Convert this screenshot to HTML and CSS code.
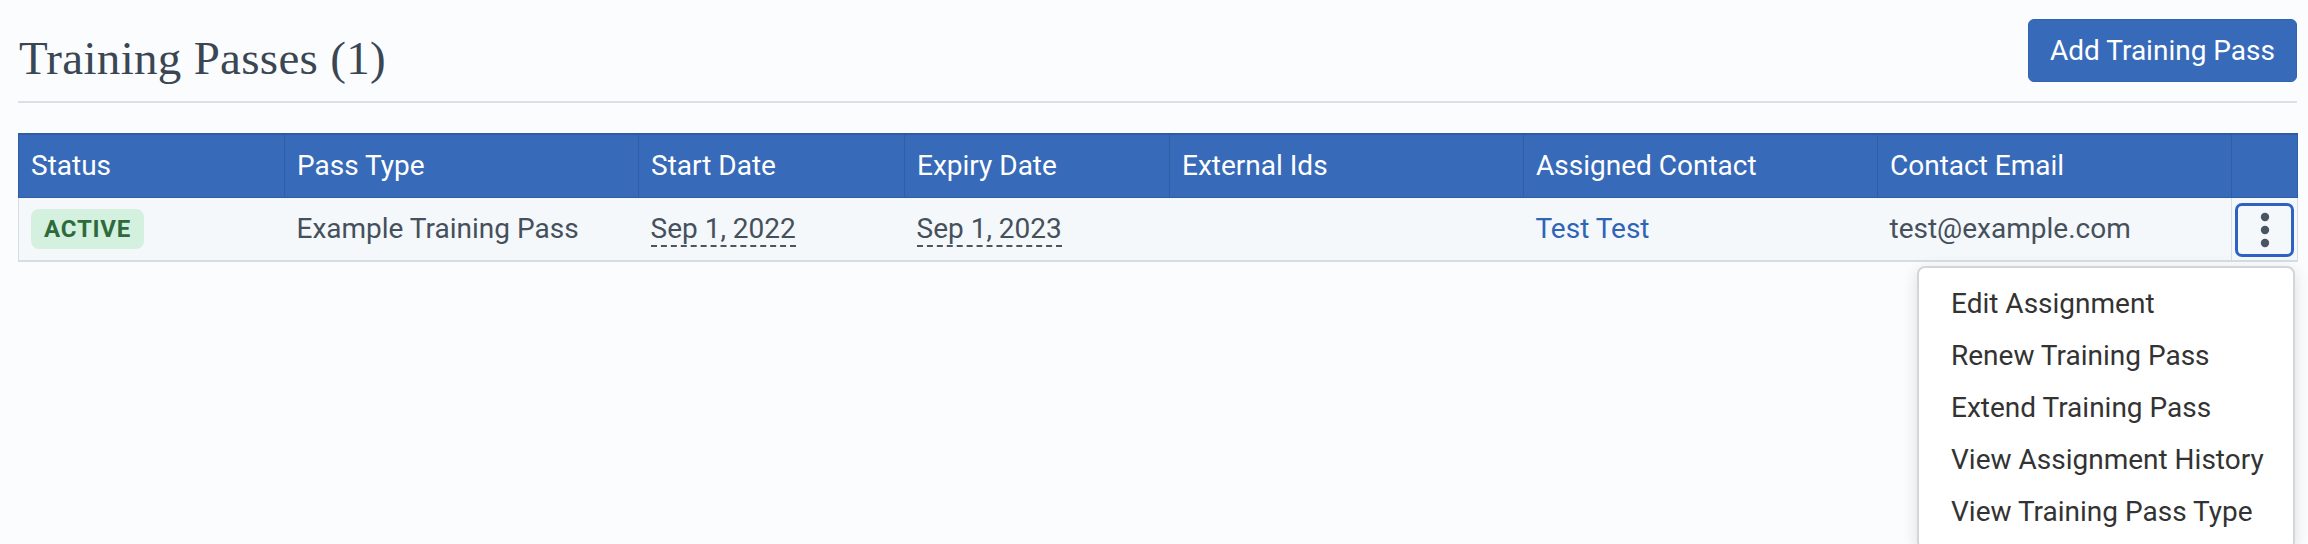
FILE: index.html
```html
<!DOCTYPE html>
<html lang="en">
<head>
<meta charset="utf-8">
<title>Training Passes</title>
<link rel="stylesheet" href="styles.css">
</head>
<body>
<div class="page">
  <div class="page-header">
    <h1 class="title">Training Passes (1)</h1>
    <button class="btn-primary" type="button">Add Training Pass</button>
  </div>
  <table class="grid">
    <colgroup>
      <col class="c-status">
      <col class="c-wide">
      <col class="c-date">
      <col class="c-date2">
      <col class="c-wide">
      <col class="c-wide">
      <col class="c-wide">
      <col class="c-act">
    </colgroup>
    <thead>
      <tr>
        <th>Status</th>
        <th>Pass Type</th>
        <th>Start Date</th>
        <th>Expiry Date</th>
        <th>External Ids</th>
        <th>Assigned Contact</th>
        <th>Contact Email</th>
        <th></th>
      </tr>
    </thead>
    <tbody>
      <tr>
        <td><span class="badge">ACTIVE</span></td>
        <td>Example Training Pass</td>
        <td><span class="date">Sep 1, 2022</span></td>
        <td><span class="date">Sep 1, 2023</span></td>
        <td></td>
        <td><a class="link" href="#">Test Test</a></td>
        <td>test@example.com</td>
        <td class="actions">
          <button class="kebab" type="button" aria-label="Actions">
            <svg width="10" height="36" viewBox="0 0 10 36"><circle cx="5" cy="5" r="4.2" fill="#4a5563"/><circle cx="5" cy="18" r="4.2" fill="#4a5563"/><circle cx="5" cy="31" r="4.2" fill="#4a5563"/></svg>
          </button>
        </td>
      </tr>
    </tbody>
  </table>
  <div class="menu-row">
    <div class="menu">
      <div class="menu-item">Edit Assignment</div>
      <div class="menu-item">Renew Training Pass</div>
      <div class="menu-item">Extend Training Pass</div>
      <div class="menu-item">View Assignment History</div>
      <div class="menu-item">View Training Pass Type</div>
    </div>
  </div>
</div>
</body>
</html>
```
FILE: styles.css
```css
html {
  background: #fbfcfd;
}

body {
  margin: 0;
  padding: 0;
  background: #fbfcfd;
}

.page {
  padding: 19px 11px 0 18px;
  font-family: Roboto, "Liberation Sans", sans-serif;
}

.page-header {
  display: flex;
  justify-content: space-between;
  align-items: flex-end;
  padding-bottom: 19px;
  border-bottom: 2px solid #d9e0e6;
}

.title {
  margin: 0 0 0 1px;
  font-family: "Liberation Serif", "DejaVu Serif", serif;
  font-weight: normal;
  font-size: 47px;
  line-height: 48px;
  color: #3a4653;
  letter-spacing: 0.3px;
}

.btn-primary {
  width: 269px;
  height: 63px;
  border: 1px solid #3064b0;
  border-radius: 6px;
  background: #376bb9;
  color: #ffffff;
  font-family: Roboto, "Liberation Sans", sans-serif;
  font-size: 28px;
  padding: 0;
}

.grid {
  margin-top: 30px;
  width: 2279px;
  border-collapse: collapse;
  table-layout: fixed;
  font-size: 28px;
}

.c-status { width: 266px; }
.c-wide { width: 354px; }
.c-date { width: 266px; }
.c-date2 { width: 265px; }
.c-act { width: 66px; }

.grid th {
  height: 63px;
  padding: 0 12px;
  background: #376ab8;
  color: #ffffff;
  font-weight: normal;
  text-align: left;
  border: 1px solid #2f5ea6;
  border-top: 2px solid #2e5ca3;
  white-space: nowrap;
  box-sizing: border-box;
}

.grid td {
  height: 64px;
  padding: 0 12px;
  background: #f4f8fa;
  color: #45505c;
  border-bottom: 2px solid #d6dee4;
  vertical-align: middle;
  white-space: nowrap;
  box-sizing: border-box;
}

.grid td:first-child {
  border-left: 1px solid #d6dee4;
}

.badge {
  display: inline-block;
  height: 40px;
  line-height: 40px;
  padding: 0 13px;
  border-radius: 8px;
  background: #d3f1de;
  color: #2f6a3c;
  font-weight: bold;
  font-size: 24px;
  letter-spacing: 0.8px;
}

.date {
  border-bottom: 2px dashed #4b5561;
}

.link {
  color: #2f64b7;
  text-decoration: none;
}

.grid td.actions {
  padding: 0 3px;
  border-left: 1px solid #d6dee4;
  border-right: 1px solid #d6dee4;
}

.kebab {
  display: flex;
  align-items: center;
  justify-content: center;
  width: 59px;
  height: 54px;
  margin-top: 2px;
  padding: 0;
  background: transparent;
  border: 3px solid #2d61c2;
  border-radius: 7px;
}

.menu-row {
  display: flex;
  justify-content: flex-end;
  margin-top: 4px;
  padding-right: 2px;
}

.menu {
  width: 378px;
  box-sizing: border-box;
  padding: 10px 0;
  background: #ffffff;
  border: 2px solid #d3d6d9;
  border-radius: 8px;
  box-shadow: 0 4px 16px rgba(0, 0, 0, 0.12);
}

.menu-item {
  padding: 0 0 0 32px;
  line-height: 52px;
  font-size: 28px;
  color: #333333;
}
```
